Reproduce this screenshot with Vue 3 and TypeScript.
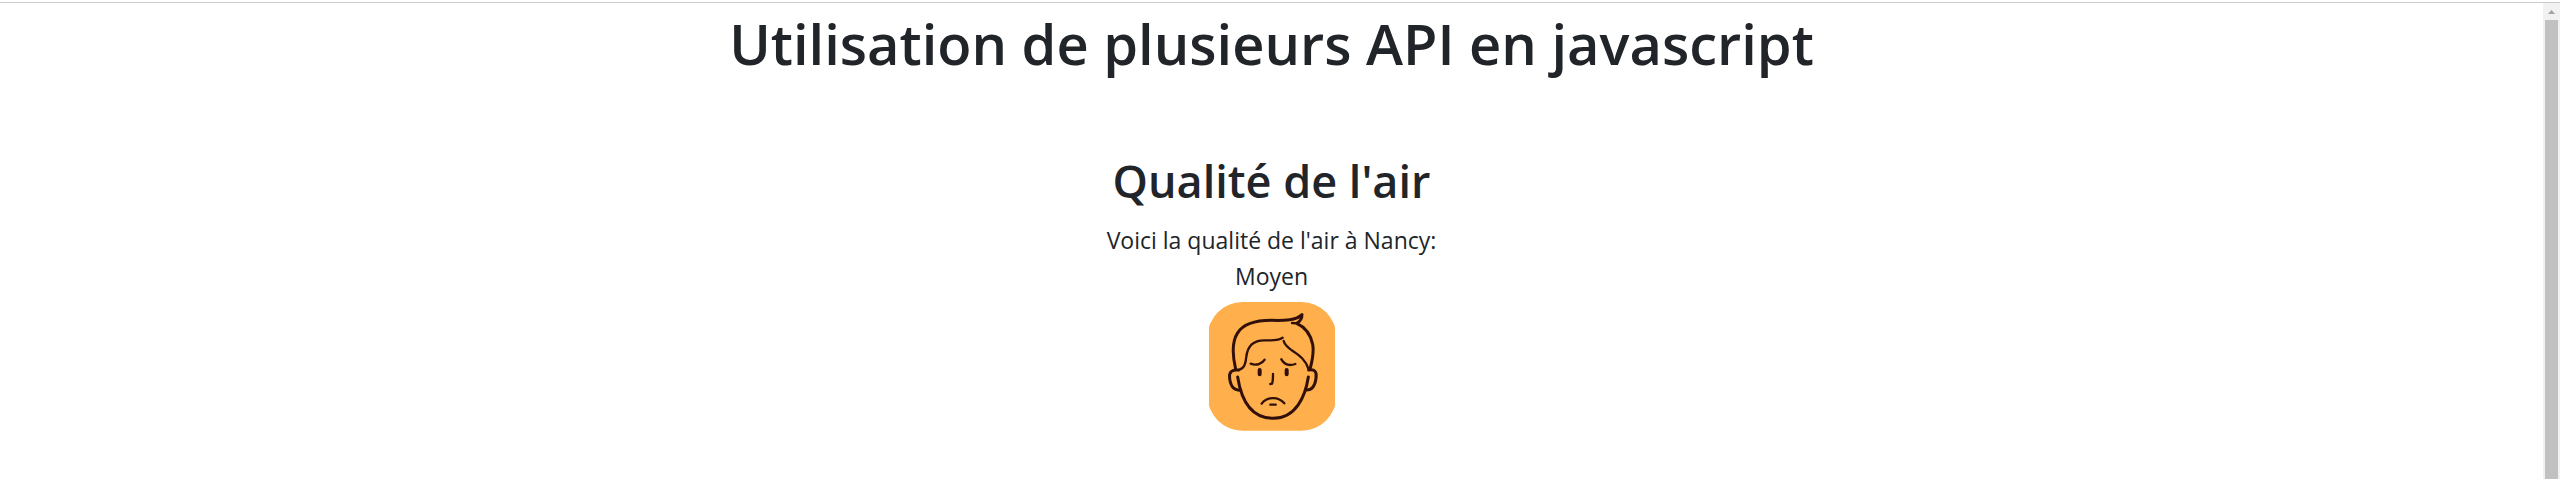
<script setup lang="ts">
const title: string = "Utilisation de plusieurs API en javascript"
const city: string = 'Nancy'
const quality: string = 'Moyen'
</script>

<template>
  <div class="page">
    <main class="content">
      <h1>{{ title }}</h1>
      <section class="air">
        <h2>Qualité de l'air</h2>
        <p>Voici la qualité de l'air à {{ city }}:</p>
        <p>{{ quality }}</p>
        <svg class="face" viewBox="42 37 378 387" role="img" :aria-label="quality">
          <rect x="38" y="37" width="386" height="386" rx="104" fill="#ffb04c" />
          <g fill="none" stroke="#32100a" stroke-linecap="round" stroke-linejoin="round">
            <g stroke-width="9">
              <path d="M122 239C112 196 110 158 127 131C145 101 183 92 230 92C270 93 304 92 321 75C321 86 315 95 305 101C332 113 347 135 353 164C358 190 351 216 345 239" />
              <path d="M131 241C109 239 101 248 104 267C107 290 117 304 137 301" />
              <path d="M341 241C360 238 366 247 363 266C360 289 351 302 333 301" />
              <path d="M128 262C137 320 163 386 235 386C303 386 331 320 340 262" />
            </g>
            <g stroke-width="7">
              <path d="M291 100L307 101" />
              <path d="M131 241C148 236 152 223 154 201C158 165 181 151 211 152C232 152 252 154 263 144" />
              <path d="M266 154C274 186 325 187 341 239" />
              <path d="M167 222C184 229 201 223 209 210" />
              <path d="M259 209C268 224 284 229 301 223" />
              <path d="M234 253C234 267 234 276 231 282L226 283" />
              <path d="M200 342C215 321 250 319 268 341" />
              <path d="M226 345H242" />
            </g>
            <path d="M194 241V254M275 241V254" stroke-width="12" />
          </g>
        </svg>
      </section>
    </main>
    <div class="scrollbar" aria-hidden="true">
      <svg class="arrow" viewBox="0 0 17 17"><path d="M5 11L8.500 7L12 11Z" fill="#a3a3a3" /></svg>
      <div class="thumb"></div>
    </div>
  </div>
</template>

<style>
body {
  margin: 0;
  background: #fff;
}
</style>

<style scoped>
.page {
  display: flex;
  box-sizing: border-box;
  min-height: 100vh;
  padding-top: 2px;
  color: #212529;
  font-family: "Open Sans", "Noto Sans", sans-serif;
  background: linear-gradient(#ccc, #ccc) 0 2px / 100% 1px no-repeat #fff;
}

.content {
  flex: 1;
  padding-top: 5px;
  text-align: center;
}

h1,
h2 {
  margin: 0;
  font-weight: 600;
}

h1 {
  font-size: 56px;
  line-height: 72px;
}

.air {
  margin-top: 73px;
}

h2 {
  margin-bottom: 12px;
  font-size: 45px;
  line-height: 58px;
}

p {
  margin: 0;
  font-size: 23px;
  line-height: 36px;
}

.face {
  display: block;
  width: 126px;
  height: 129px;
  margin: 8px auto 0;
}

.scrollbar {
  display: flex;
  flex-direction: column;
  width: 17px;
  margin-top: 1px;
  background: #f1f1f1;
}

.arrow {
  width: 17px;
  height: 17px;
}

.thumb {
  flex: 1;
  margin: 0 2px;
  background: #c1c1c1;
}
</style>
